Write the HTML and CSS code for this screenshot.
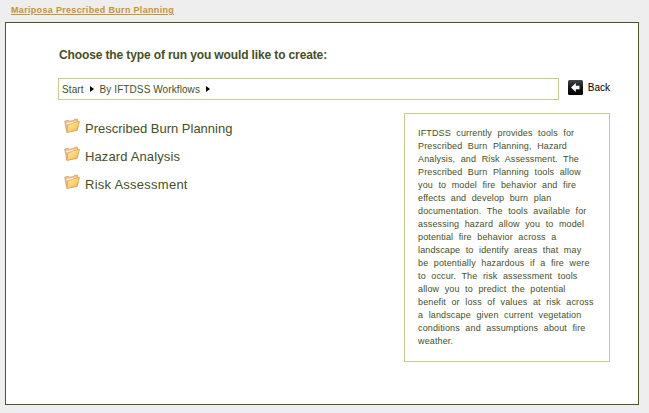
FILE: index.html
```html
<!DOCTYPE html>
<html lang="en">
<head>
<meta charset="utf-8">
<title>Mariposa Prescribed Burn Planning</title>
<link rel="stylesheet" href="styles.css">
</head>
<body>
<svg class="defs" width="0" height="0" aria-hidden="true">
  <defs>
    <linearGradient id="front" x1="0" y1="0" x2="1" y2="1"><stop offset="0" stop-color="#fff0b4"/><stop offset=".5" stop-color="#fdd571"/><stop offset="1" stop-color="#f5a833"/></linearGradient>
    <linearGradient id="dark" x1="0" y1="0" x2="0" y2="1"><stop offset="0" stop-color="#42474a"/><stop offset=".5" stop-color="#14171a"/><stop offset="1" stop-color="#000"/></linearGradient>
    <symbol id="folder" viewBox="0 0 16 16">
      <path d="M.7 3.2 4.6 2.3 5.6 3.3 9.8 2.4 10.4 1.4 13.2 1 13.8 3 12.8 12 2.8 14Z" fill="#f1bd94" stroke="#cf9068" stroke-width=".7"/>
      <path d="M2 5.1 12.8 3 12.5 5 3.5 7Z" fill="#fff3e4"/>
      <path d="M2.9 14.5 4.1 6.4 8 5.7 9 4.7 15.5 3.4 13.2 12.3Z" fill="url(#front)" stroke="#dc9638" stroke-width=".7" stroke-linejoin="round"/>
    </symbol>
  </defs>
</svg>
<a class="project">Mariposa Prescribed Burn Planning</a>
<main class="panel">
  <h1>Choose the type of run you would like to create:</h1>
  <div class="nav">
    <div class="crumbs"><span>Start</span><i class="arrow"></i><span>By IFTDSS Workflows</span><i class="arrow"></i></div>
    <a class="back"><svg width="15" height="15" viewBox="0 0 15 15"><rect width="15" height="15" rx="1.5" fill="url(#dark)"/><path d="M3 7.5 7.8 3V5.8H11.5V9.2H7.8V12Z" fill="#fff"/></svg><span>Back</span></a>
  </div>
  <div class="content">
    <ul class="runs">
      <li><svg><use href="#folder"/></svg><span>Prescribed Burn Planning</span></li>
      <li class="loose"><svg><use href="#folder"/></svg><span>Hazard Analysis</span></li>
      <li class="looser"><svg><use href="#folder"/></svg><span>Risk Assessment</span></li>
    </ul>
    <p class="info">IFTDSS currently provides tools for<br>Prescribed Burn Planning, Hazard<br>Analysis, and Risk Assessment. The<br>Prescribed Burn Planning tools allow<br>you to model fire behavior and fire<br>effects and develop burn plan<br>documentation. The tools available for<br>assessing hazard allow you to model<br>potential fire behavior across a<br>landscape to identify areas that may<br>be potentially hazardous if a fire were<br>to occur. The risk assessment tools<br>allow you to predict the potential<br>benefit or loss of values at risk across<br>a landscape given current vegetation<br>conditions and assumptions about fire<br>weather.</p>
  </div>
</main>
</body>
</html>
```
FILE: styles.css
```css
* { box-sizing: border-box; }
body {
  margin: 0;
  padding: 4px 10px 0 5px;
  height: 413px;
  overflow: hidden;
  background: #eee;
  color: #454f25;
  font-family: "Liberation Sans", Arial, sans-serif;
}
.defs { position: absolute; }
.project {
  display: block;
  height: 18px;
  padding-left: 6px;
  font-size: 9px;
  line-height: 12px;
  font-weight: bold;
  letter-spacing: .32px;
  color: #cc922d;
  text-decoration: underline;
}
.panel {
  height: 383px;
  padding: 24px 28px 0 52px;
  border: 1px solid #4b5628;
  background: #fff;
}
h1 {
  margin: 0 0 15px 1px;
  font-size: 12px;
  line-height: 16px;
  letter-spacing: -.125px;
}
.nav { display: flex; height: 22px; }
.crumbs {
  display: flex;
  align-items: center;
  width: 501px;
  padding-left: 3px;
  border: 1px solid #c8cb8f;
  font-size: 10px;
  letter-spacing: .09px;
}
.arrow {
  margin: 0 6px;
  border-left: 4px solid #000;
  border-top: 3px solid transparent;
  border-bottom: 3px solid transparent;
}
.back {
  display: flex;
  align-items: center;
  gap: 5px;
  margin: -3px 0 0 9px;
  font-size: 10px;
  color: #000;
}
.content {
  display: flex;
  justify-content: space-between;
  align-items: flex-start;
  margin-top: 13px;
}
.runs { margin: 2px 0 0 6px; padding: 0; list-style: none; }
.runs li {
  display: flex;
  gap: 5px;
  height: 28px;
  font-size: 13px;
  line-height: 28px;
}
.runs .loose { letter-spacing: .12px; }
.runs .looser { letter-spacing: .25px; }
.runs svg { width: 16px; height: 16px; margin-top: 3px; }
.info {
  width: 206px;
  height: 249px;
  margin: 0;
  padding: 13px 0 0 13px;
  border: 1px solid #c8cb8f;
  font-size: 9px;
  line-height: 13px;
  letter-spacing: .13px;
  word-spacing: 2.9px;
  white-space: nowrap;
}
```
